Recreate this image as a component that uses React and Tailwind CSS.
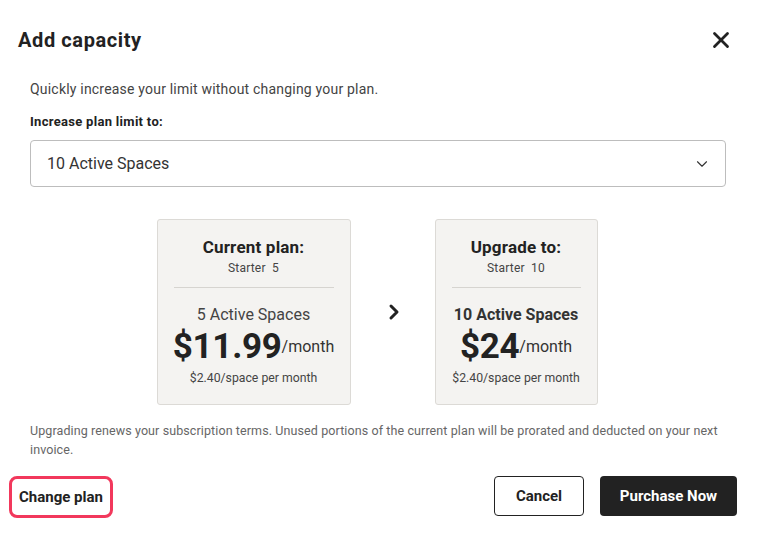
import { X, ChevronDown, ChevronRight } from 'lucide-react';

const PlanCard = ({ heading, tier, spaces, spacesBold, price, width }) => (
    <div className={`${width} h-[186px] rounded-[3px] border border-[#dcdad6] bg-[#f4f3f1] px-[16px] pt-[17px] flex flex-col items-center text-[#222]`}>
        <div className="text-[17px] font-bold leading-[21px] tracking-[0.2px]">{heading}</div>
        <div className="text-[12px] leading-[16px] text-[#444] mt-[2px] whitespace-pre tracking-[0.2px]">{tier}</div>
        <div className="w-full h-px bg-[#d6d4d0] mt-[11px]" />
        <div className={`text-[16px] leading-[20px] mt-[17px] ${spacesBold ? 'font-bold text-[#333]' : 'text-[#444]'}`}>{spaces}</div>
        <div className="flex items-center mt-[2px]">
            <span className="text-[35px] font-bold leading-[40px] tracking-[-0.3px]">{price}</span>
            <span className="text-[16px] text-[#333] mb-[1px]">/month</span>
        </div>
        <div className="text-[12.25px] text-[#444] mt-[3px] leading-[16px]">$2.40/space per month</div>
    </div>
);

export default function App() {
    return (
        <div className="w-[758px] h-[537px] bg-white relative overflow-hidden" style={{ fontFamily: 'Roboto, "Liberation Sans", sans-serif' }}>
            <div className="flex items-center justify-between pl-[18px] pr-[24px] pt-[27px]">
                <h1 className="text-[20px] font-bold text-[#222] leading-[26px] tracking-[0.6px]">Add capacity</h1>
                <X size={26} strokeWidth={2.6} className="text-[#222]" />
            </div>

            <div className="px-[30px] mt-[27px]">
                <p className="text-[14px] text-[#444] leading-[18px] tracking-[0.2px]">Quickly increase your limit without changing your plan.</p>
                <div className="text-[13px] font-bold text-[#222] mt-[16px] leading-[16px] tracking-[0.3px]">Increase plan limit to:</div>
                <div className="mt-[10px] w-[696px] h-[47px] rounded-[4px] border border-[#bdbdbd] flex items-center justify-between pl-[16px] pr-[14px]">
                    <span className="text-[16px] text-[#333]">10 Active Spaces</span>
                    <ChevronDown size={18} strokeWidth={1.5} className="text-[#333]" />
                </div>
            </div>

            <div className="flex justify-center items-center mt-[32px] pr-[4px]">
                <PlanCard heading="Current plan:" tier="Starter  5" spaces="5 Active Spaces" price="$11.99" width="w-[194px]" />
                <div className="w-[84px] flex justify-center pl-[2px]">
                    <ChevronRight size={24} strokeWidth={3} className="text-[#222]" />
                </div>
                <PlanCard heading="Upgrade to:" tier="Starter  10" spaces="10 Active Spaces" spacesBold price="$24" width="w-[163px]" />
            </div>

            <p className="px-[30px] mt-[16px] text-[12.5px] text-[#666] leading-[19px] tracking-[0.1px]">
                Upgrading renews your subscription terms. Unused portions of the current plan will be prorated and deducted on your next invoice.
            </p>

            <div className="flex items-center justify-between pl-[9px] pr-[21px] mt-[15px]">
                <button className="h-[42px] mt-[2px] px-[7px] rounded-[8px] border-[3px] border-[#f2385c] text-[15px] font-bold text-[#222]">Change plan</button>
                <div className="flex items-center gap-[16px]">
                    <button className="w-[90px] h-[40px] rounded-[4px] border-[1.5px] border-[#222] text-[15px] font-bold text-[#222]">Cancel</button>
                    <button className="w-[137px] h-[40px] rounded-[4px] bg-[#222] text-[15px] font-bold text-white">Purchase Now</button>
                </div>
            </div>
        </div>
    );
}
